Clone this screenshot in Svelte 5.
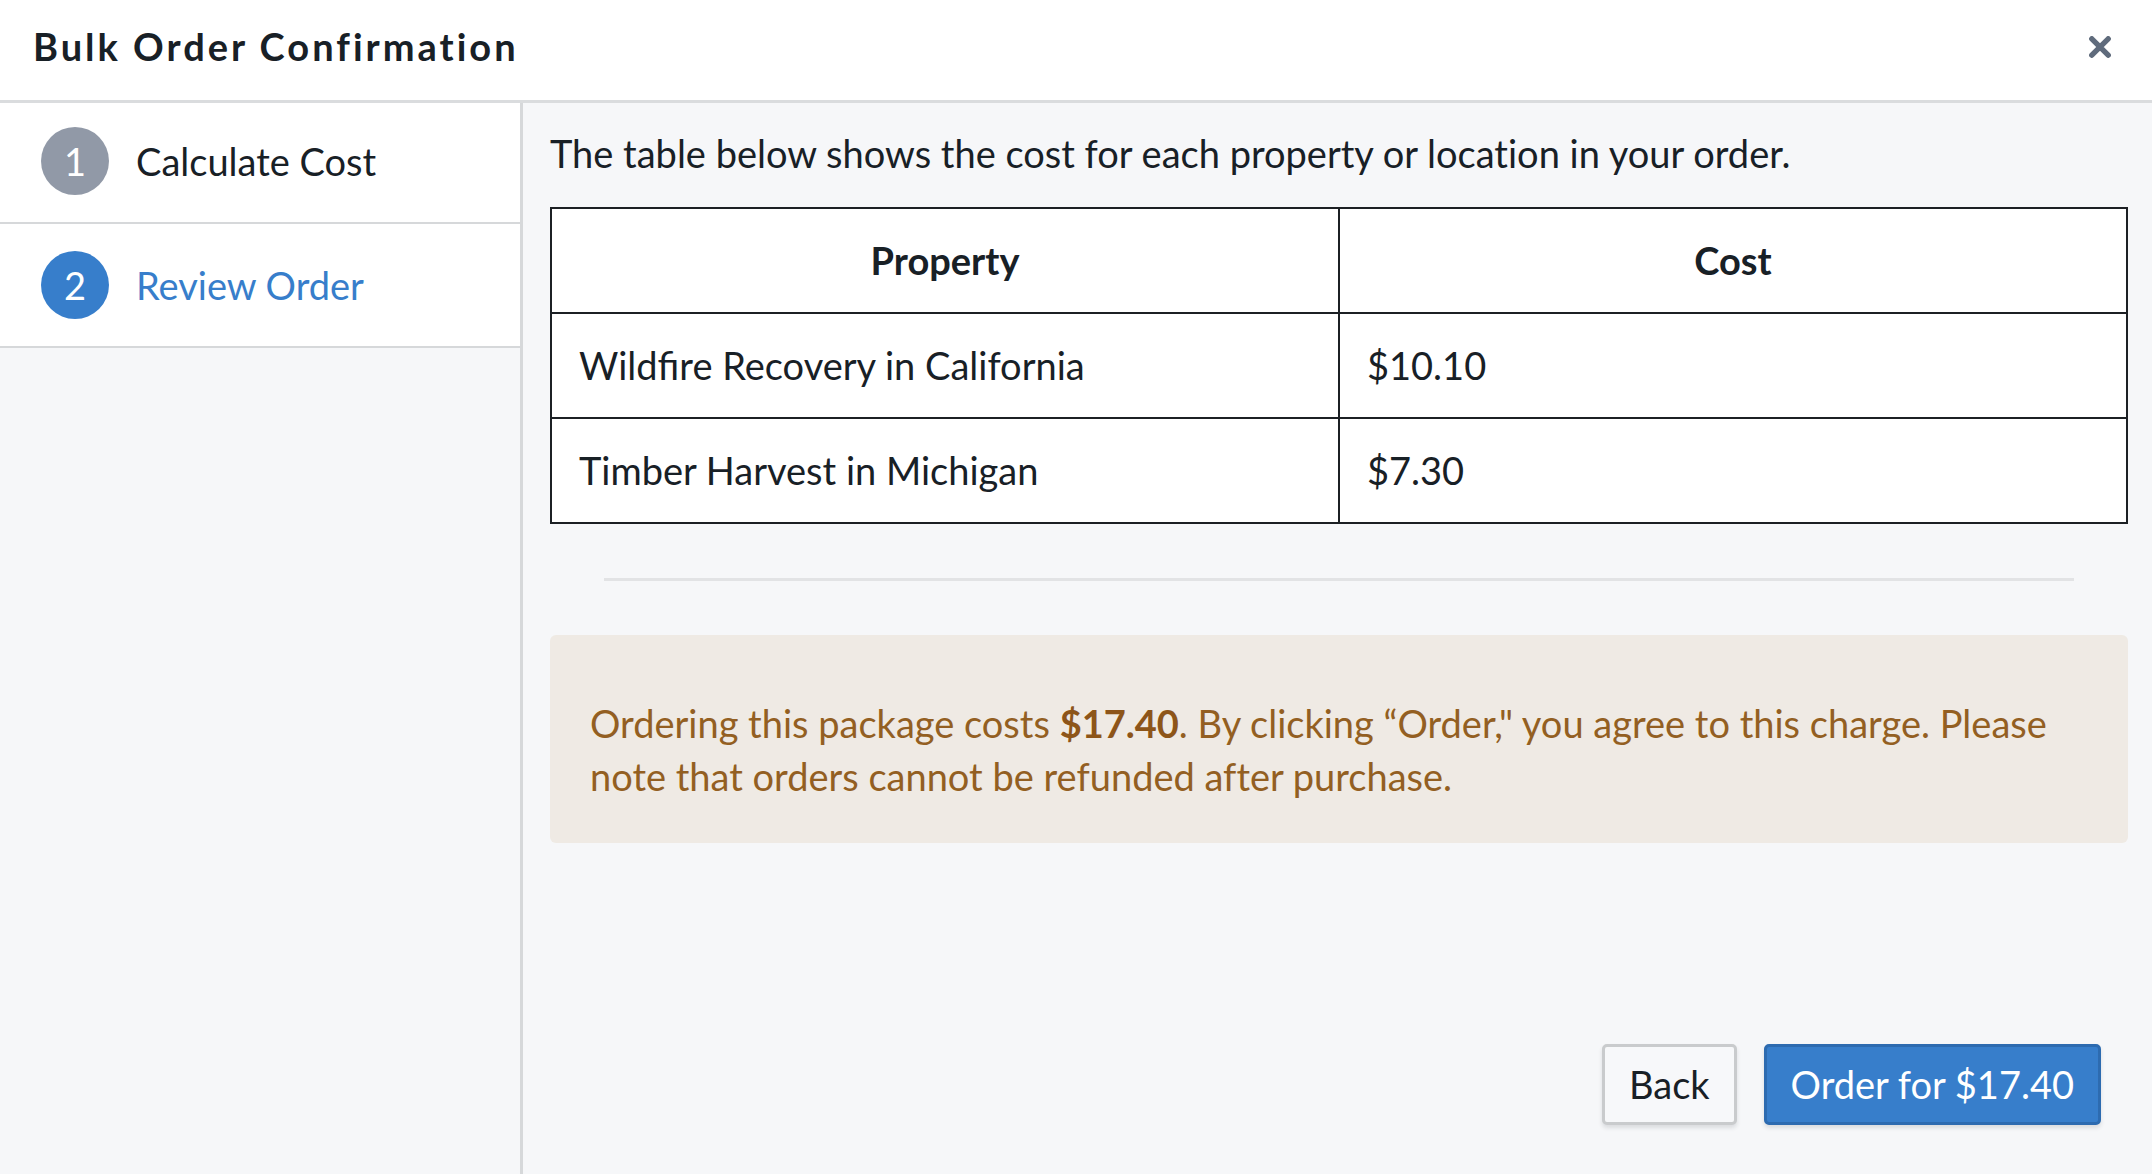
<script lang="ts">
	type OrderItem = { property: string; cost: number };

	const steps = ['Calculate Cost', 'Review Order'];
	let currentStep = $state(1);

	const items: OrderItem[] = [
		{ property: 'Wildfire Recovery in California', cost: 10.1 },
		{ property: 'Timber Harvest in Michigan', cost: 7.3 }
	];

	const total = $derived(items.reduce((sum, item) => sum + item.cost, 0));

	function usd(amount: number) {
		return `$${amount.toFixed(2)}`;
	}
</script>

<div class="dialog" role="dialog" aria-labelledby="dialog-title">
	<header class="dialog-header">
		<h1 id="dialog-title">Bulk Order Confirmation</h1>
		<button class="close" type="button" aria-label="Close">
			<svg viewBox="0 0 22 22" aria-hidden="true">
				<path d="M2.8 2.8 L19.2 19.2 M19.2 2.8 L2.8 19.2" />
			</svg>
		</button>
	</header>

	<div class="dialog-body">
		<nav class="steps" aria-label="Order steps">
			{#each steps as step, i}
				<button
					class="step"
					class:active={i === currentStep}
					type="button"
					aria-current={i === currentStep ? 'step' : undefined}
					onclick={() => (currentStep = i)}
				>
					<span class="step-icon">{i + 1}</span>
					<span>{step}</span>
				</button>
			{/each}
		</nav>

		<main class="panel">
			<p class="intro">The table below shows the cost for each property or location in your order.</p>

			<table>
				<thead>
					<tr>
						<th scope="col">Property</th>
						<th scope="col">Cost</th>
					</tr>
				</thead>
				<tbody>
					{#each items as item}
						<tr>
							<td>{item.property}</td>
							<td>{usd(item.cost)}</td>
						</tr>
					{/each}
				</tbody>
			</table>

			<hr />

			<p class="callout">
				Ordering this package costs <strong>{usd(total)}</strong>. By clicking “Order," you agree to
				this charge. Please note that orders cannot be refunded after purchase.
			</p>

			<footer class="actions">
				<button class="button" type="button">Back</button>
				<button class="button primary" type="button">Order for {usd(total)}</button>
			</footer>
		</main>
	</div>
</div>

<style>
	:global(body) {
		margin: 0;
	}
	.dialog {
		display: flex;
		flex-direction: column;
		min-height: 100vh;
		background: #f6f7f9;
		color: #182026;
		font-family: Lato, sans-serif;
		font-size: 38px;
		line-height: 53px;
	}
	.dialog *,
	.dialog {
		box-sizing: border-box;
	}
	button {
		font: inherit;
		cursor: pointer;
	}
	/* the divider is a shadow, so it lies over the top of the body */
	.dialog-header {
		position: relative;
		z-index: 1;
		display: flex;
		align-items: center;
		justify-content: space-between;
		padding: 20px 33px 27px;
		background: #fff;
		box-shadow: 0 3px 0 #dadcde;
	}
	h1 {
		margin: 0;
		font-size: 38px;
		font-weight: 700;
		letter-spacing: 3px;
	}
	.close {
		display: flex;
		padding: 8px;
		border: 0;
		background: none;
	}
	.close svg {
		width: 22px;
		height: 22px;
		fill: none;
		stroke: #5f6b7c;
		stroke-width: 5.4;
		stroke-linecap: round;
	}
	.dialog-body {
		display: flex;
		flex: 1;
	}
	.steps {
		flex: 0 0 523px;
		border-right: 3px solid #d6d8da;
	}
	.step {
		display: flex;
		align-items: center;
		gap: 27px;
		width: 100%;
		padding: 27px 41px;
		border: 0;
		border-bottom: 2px solid #d6d8da;
		background: #fff;
		color: #182026;
		text-align: left;
	}
	.step-icon {
		flex: 0 0 68px;
		height: 68px;
		border-radius: 50%;
		background: #9199a7;
		color: #fff;
		line-height: 68px;
		text-align: center;
	}
	.step.active {
		color: #377ecb;
	}
	.step.active .step-icon {
		background: #377ecb;
		color: #fff;
	}
	.panel {
		display: flex;
		flex: 1;
		flex-direction: column;
		min-width: 0;
		padding: 27px 24px 49px 27px;
	}
	.intro,
	.callout {
		font-variant-ligatures: no-common-ligatures;
	}
	.intro {
		margin: 0 0 27px;
	}
	table {
		width: 100%;
		table-layout: fixed;
		border-collapse: collapse;
		background: #fff;
	}
	th,
	td {
		padding: 25px 27px;
		border: 2px solid #1c2024;
	}
	th {
		font-weight: 700;
		text-align: center;
	}
	hr {
		align-self: stretch;
		margin: 54px;
		border: 0;
		border-top: 3px solid #e2e3e5;
	}
	.callout {
		margin: 0;
		padding: 62px 40px 40px;
		border-radius: 6px;
		background: #efeae4;
		color: #935f22;
	}
	.callout strong {
		font-weight: 700;
		color: #8d5519;
	}
	.actions {
		display: flex;
		justify-content: flex-end;
		gap: 27px;
		margin-top: auto;
		padding: 27px 27px 0;
	}
	.button {
		height: 81px;
		padding: 0 24px;
		border: 3px solid #c9cbcd;
		border-radius: 5px;
		background: #f7f8fa;
		color: #182026;
		box-shadow: 0 3px 4px rgba(24, 32, 38, 0.12);
	}
	.button.primary {
		border-color: #2d6bb0;
		background: #377ecb;
		color: #fff;
	}
</style>
